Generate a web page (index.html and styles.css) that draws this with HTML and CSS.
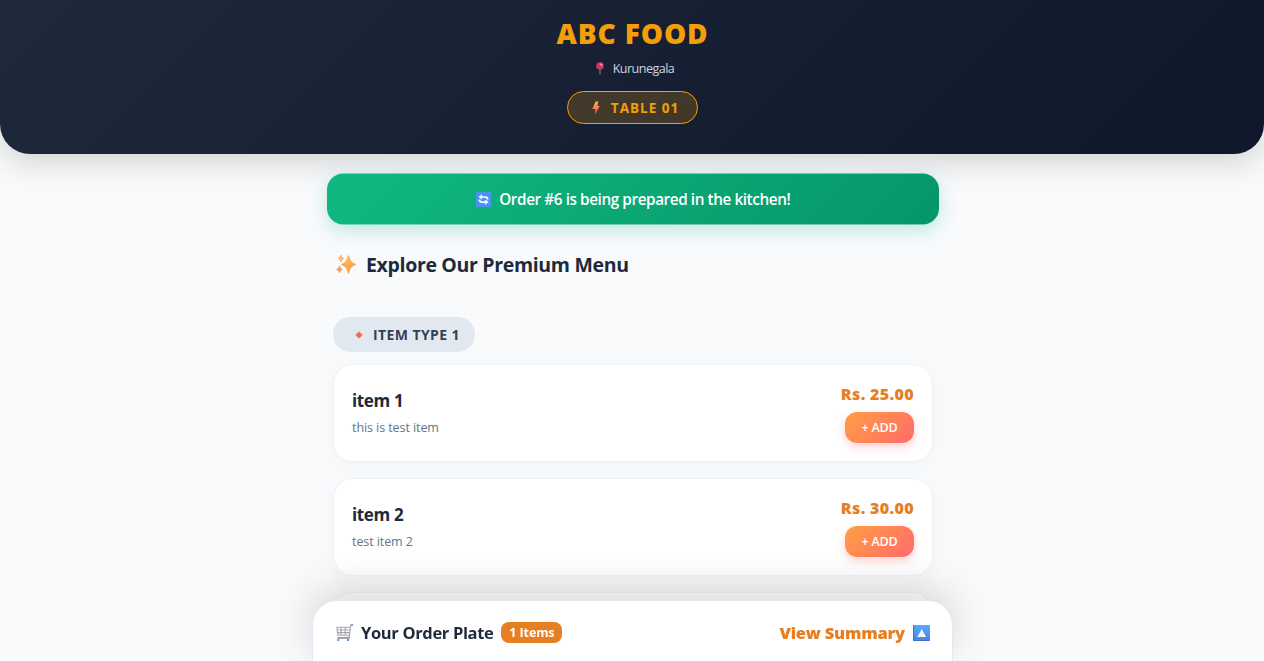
FILE: index.html
```html
<!DOCTYPE html>
<html lang="en">
<head>
  <meta charset="UTF-8">
  <meta name="viewport" content="width=device-width, initial-scale=1.0">
  <title>ABC Food - Table 01</title>
  <link rel="stylesheet" href="styles.css">
</head>
<body>

  <header class="header">
    <h1>ABC FOOD</h1>
    <p class="location">
      <svg width="10" height="13" viewBox="0 0 10 13"><path d="M5 7v5.5" stroke="#7d7f96" stroke-width="1.1"/><circle cx="5" cy="4" r="3.8" fill="#cf3565"/><circle cx="6.2" cy="2.6" r="1.2" fill="#f398b2"/></svg>
      <span>Kurunegala</span>
    </p>
    <div class="table-badge">
      <svg width="8" height="14" viewBox="0 0 8 14"><defs><linearGradient id="bolt" x1="0" y1="0" x2="0" y2="1"><stop offset="0" stop-color="#ffb557"/><stop offset="1" stop-color="#f2434e"/></linearGradient></defs><path d="M3.6.5h2.6L5.4 5h2.4L3 13.6 3.4 8H.3z" fill="url(#bolt)"/></svg>
      <span>TABLE 01</span>
    </div>
  </header>

  <main class="container">
    <div class="order-status">
      <svg width="15" height="15" viewBox="0 0 15 15"><rect width="15" height="15" rx="1.5" fill="#4a93f3"/><path d="M4.6 5H9q2.6 0 2.6 2.6M10.4 10H6Q3.4 10 3.4 7.4" fill="none" stroke="#fff" stroke-width="1.6"/><path d="M2.6 5 6 2.4v5.2zM12.4 10 9 7.4v5.2z" fill="#fff"/></svg>
      <span>Order #6 is being prepared in the kitchen!</span>
    </div>

    <h2 class="menu-title">
      <svg width="20" height="19" viewBox="0 0 20 19"><defs><linearGradient id="spark" x1="0" y1="0" x2="0" y2="1"><stop offset="0" stop-color="#ffcb4f"/><stop offset="1" stop-color="#fb8a5c"/></linearGradient></defs><g fill="url(#spark)"><path d="M12.5.5Q13.7 8 19.7 9.5 13.7 11 12.5 18.5 11.3 11 5.3 9.5 11.3 8 12.5.5z" stroke="#fdaa51" stroke-width="1.1"/><path d="M5 .3Q5.5 3 7.7 3.5 5.5 4 5 6.7 4.5 4 2.3 3.5 4.5 3 5 .3zM3.5 11Q4 14 6.5 14.5 4 15 3.5 18 3 15 .5 14.5 3 14 3.5 11z" stroke="#fb9b57" stroke-width=".7"/></g></svg>
      <span>Explore Our Premium Menu</span>
    </h2>

    <div class="category">
      <svg width="8" height="8" viewBox="0 0 8 8"><path d="M4 .4 7.6 4 4 7.6.4 4z" fill="#f9694d"/></svg>
      <span>ITEM TYPE 1</span>
    </div>

    <div class="menu-item">
      <div class="item-info">
        <h3>item 1</h3>
        <p>this is test item</p>
      </div>
      <div class="item-action">
        <div class="price">Rs. 25.00</div>
        <button class="add-btn">+ ADD</button>
      </div>
    </div>

    <div class="menu-item">
      <div class="item-info">
        <h3>item 2</h3>
        <p>test item 2</p>
      </div>
      <div class="item-action">
        <div class="price">Rs. 30.00</div>
        <button class="add-btn">+ ADD</button>
      </div>
    </div>

    <div class="menu-item"></div>
  </main>

  <!-- Bottom cart bar -->
  <div class="cart-bar">
    <div class="cart-left">
      <svg width="17" height="17" viewBox="0 0 17 17"><path d="M16.5 1h-1.8l-1.6 13H1.5M.8 3.3h13.1M.8 3.3l1 8h11.5M1.2 6h12.3M1.5 8.6h11.8M5 3.3v8M9.2 3.3v8" fill="none" stroke="#a7a3ae" stroke-width="1.1"/><path d="M1.5 13.9h12" stroke="#9b80a8" stroke-width="1.4"/><path d="M15.2.4H17v1.4h-1.8zM1.3 15.3h2v1.5h-2zM11 15.3h2v1.5h-2z" fill="#3672cf"/></svg>
      <span class="cart-title">Your Order Plate</span>
      <span class="cart-count">1 Items</span>
    </div>
    <div class="cart-right">
      <span class="summary">View Summary</span>
      <svg width="17" height="16" viewBox="0 0 17 16"><defs><linearGradient id="up" x1="0" y1="0" x2="0" y2="1"><stop offset="0" stop-color="#58a9fb"/><stop offset="1" stop-color="#4388e6"/></linearGradient></defs><rect width="17" height="16" rx=".8" fill="#3b6fce"/><rect x="1" width="16" height="15" rx=".8" fill="url(#up)"/><path d="M8.7 4 13.2 12H4.2z" fill="#f5f3ff"/></svg>
    </div>
  </div>

</body>
</html>
```

FILE: styles.css
```css
* {
  box-sizing: border-box;
  margin: 0;
  padding: 0;
}

body {
  font-family: 'Open Sans', 'Noto Sans', sans-serif;
  background: #f8fafc;
  color: #1e293b;
  height: 100vh;
  overflow: hidden;
}

svg {
  flex-shrink: 0;
}

span {
  white-space: nowrap;
}

.header {
  height: 154px;
  padding-top: 14px;
  padding-left: 1px;
  display: flex;
  flex-direction: column;
  align-items: center;
  background: linear-gradient(135deg, #1e293b, #0f172a);
  border-radius: 0 0 30px 30px;
  box-shadow: 0 10px 30px rgba(0, 0, 0, 0.15);
}

.header h1 {
  font-size: 28px;
  line-height: 38px;
  font-weight: 800;
  letter-spacing: 0.9px;
  color: #f59e0b;
}

.location {
  display: flex;
  align-items: center;
  gap: 8px;
  height: 18px;
  margin-top: 7px;
  padding-left: 4px;
  font-size: 12.5px;
  letter-spacing: -0.5px;
  color: #cbd5e1;
}

.table-badge {
  display: flex;
  align-items: center;
  justify-content: center;
  gap: 11px;
  width: 131px;
  height: 33px;
  margin-top: 14px;
  padding-left: 6px;
  border: 1px solid #f59e0b;
  border-radius: 50px;
  background: rgba(245, 158, 11, 0.2);
  color: #f59e0b;
  font-size: 13.5px;
  font-weight: 700;
  letter-spacing: 1px;
}

.container {
  width: 600px;
  margin: 0 auto;
  transform: translateX(1px);
}

.order-status {
  display: flex;
  align-items: center;
  justify-content: center;
  gap: 8px;
  height: 50px;
  margin: 20px 0 25px;
  border-radius: 16px;
  background: linear-gradient(135deg, #10b981, #059669);
  box-shadow: 0 6px 18px rgba(16, 185, 129, 0.25);
  color: #fff;
  font-size: 15px;
  font-weight: 600;
  letter-spacing: -0.41px;
  transform: scale(1.02);
}

.menu-title {
  display: flex;
  align-items: center;
  gap: 10px;
  height: 31px;
  padding-left: 3px;
  font-size: 19.5px;
  font-weight: 700;
  letter-spacing: -0.33px;
}

.category {
  display: inline-flex;
  align-items: center;
  justify-content: center;
  gap: 10px;
  width: 142px;
  height: 35px;
  margin-top: 37px;
  margin-bottom: 12px;
  padding-left: 7px;
  border-radius: 50px;
  background: #e2e8f0;
  color: #334155;
  font-size: 14px;
  font-weight: 700;
  letter-spacing: 0.4px;
  vertical-align: top;
}

.menu-item {
  display: flex;
  align-items: center;
  justify-content: space-between;
  height: 98px;
  margin-bottom: 16px;
  padding: 0 18px;
  border: 1px solid #edf2f7;
  border-radius: 20px;
  background: #fff;
  box-shadow: 0 4px 20px rgba(0, 0, 0, 0.03);
}

.item-info {
  padding-bottom: 1px;
}

.item-info h3 {
  font-size: 17px;
  line-height: 24px;
  font-weight: 700;
  letter-spacing: -0.35px;
}

.item-info p {
  margin-top: 6px;
  font-size: 12.5px;
  line-height: 18px;
  letter-spacing: -0.08px;
  color: #64748b;
}

.item-action {
  display: flex;
  flex-direction: column;
  align-items: flex-end;
}

.price {
  margin-top: -1px;
  margin-bottom: 7px;
  font-size: 16px;
  line-height: 22px;
  font-weight: 800;
  letter-spacing: 0.35px;
  color: #e67e22;
}

.add-btn {
  width: 69px;
  height: 31px;
  border: none;
  border-radius: 12px;
  background: linear-gradient(135deg, #ff9f43, #ff6b6b);
  box-shadow: 0 4px 10px rgba(255, 107, 107, 0.3);
  color: #fff;
  font-family: inherit;
  font-size: 12.5px;
  font-weight: 600;
  letter-spacing: -0.2px;
}

.cart-bar {
  position: fixed;
  bottom: 0;
  left: 50%;
  display: flex;
  justify-content: space-between;
  width: 641px;
  height: 61px;
  margin-left: -320px;
  padding: 20px 22px 0 23px;
  border: 1px solid #e2e8f0;
  border-bottom: none;
  border-radius: 25px 25px 0 0;
  background: #fff;
  box-shadow: 0 -10px 40px rgba(0, 0, 0, 0.15);
}

.cart-left,
.cart-right {
  display: flex;
  align-items: center;
  gap: 8px;
  height: 22px;
}

.cart-right svg {
  margin-top: 1px;
}

.cart-title,
.summary {
  font-size: 16.5px;
  font-weight: 700;
  letter-spacing: -0.35px;
}

.cart-count {
  width: 61px;
  height: 21px;
  border-radius: 8px;
  background: #e67e22;
  color: #fff;
  font-size: 12.5px;
  line-height: 21px;
  font-weight: 700;
  letter-spacing: -0.1px;
  text-align: center;
}

.summary {
  font-weight: 800;
  letter-spacing: -0.2px;
  color: #e67e22;
}
```
